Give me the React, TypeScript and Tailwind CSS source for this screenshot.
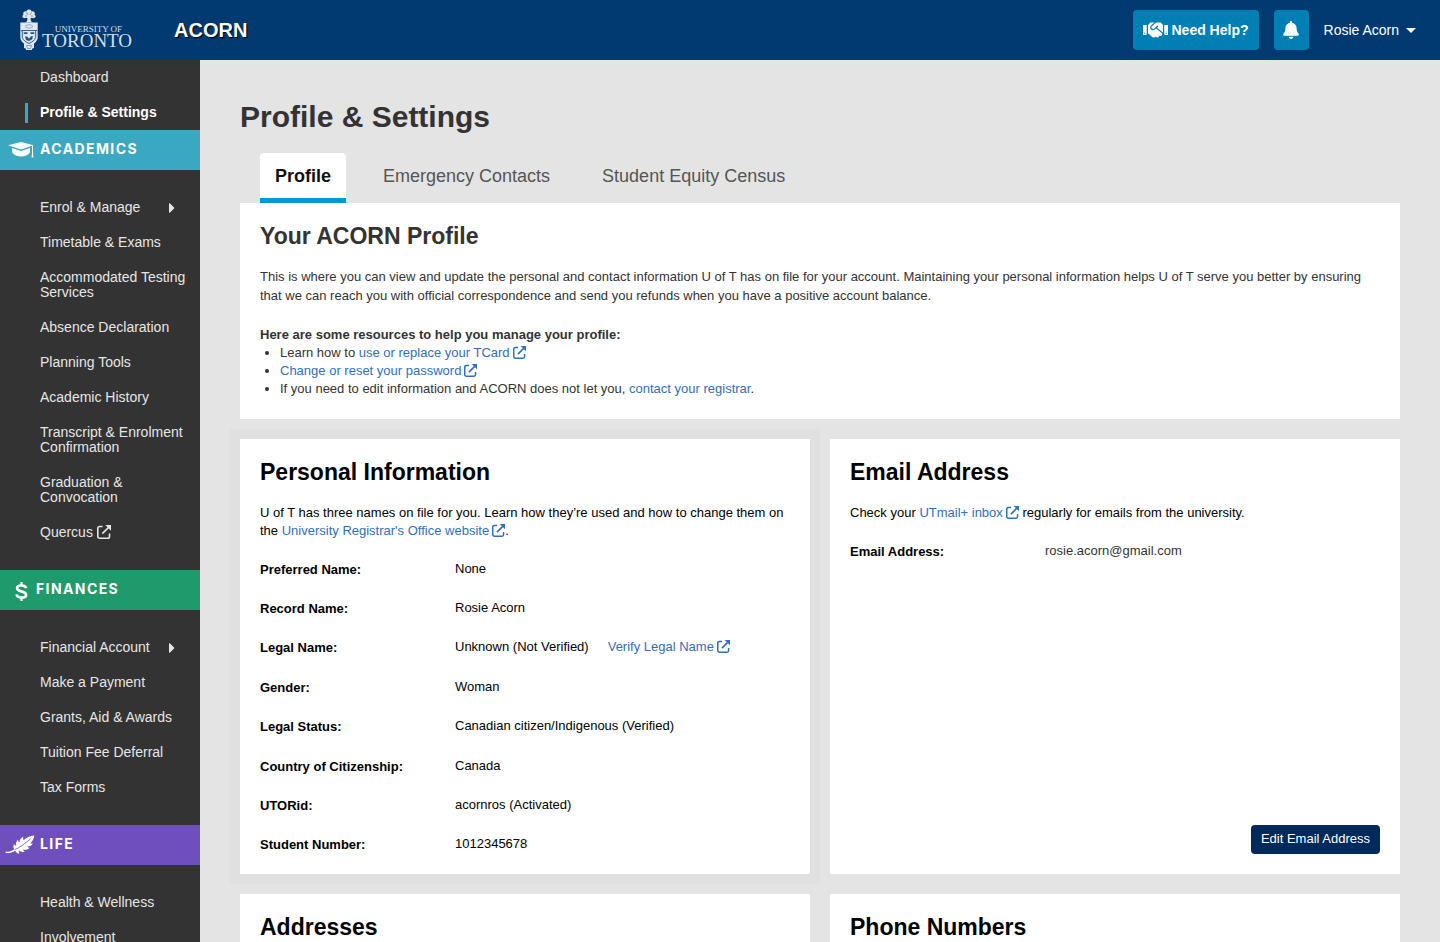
import type { ReactNode } from "react";
import { FaBell, FaCaretRight, FaHandshake } from "react-icons/fa";

function ExternalIcon({ className = "size-[13px]" }: { className?: string }) {
  return (
    <svg viewBox="0 0 14 14" className={"inline-block align-[-2px] " + className} aria-hidden="true">
      <path
        d="M5.500 1.500H2.600A1.800 1.800 0 0 0 .8 3.300v8.100a1.800 1.800 0 0 0 1.800 1.800h8.100a1.800 1.800 0 0 0 1.800-1.800V8.500"
        fill="none"
        stroke="currentColor"
        strokeWidth="1.6"
      />
      <path d="M5.300 8.700 11.500 2.500" stroke="currentColor" strokeWidth="1.7" />
      <path d="M8.300 0H14v5.700Z" fill="currentColor" />
    </svg>
  );
}

function CapIcon() {
  return (
    <svg viewBox="0 0 26 16" className="h-4 w-[26px]" fill="currentColor" aria-hidden="true">
      <path d="M0 3.200 13 0l12.500 3.200L13 7.400Z" />
      <path d="M4.200 6 13 9l9-3v4.500c-2 2.700-5.300 4-9 4s-7-1.300-8.800-4Z" />
      <path d="M24 3.500h1v8l.4 4h-1.800l.4-4Z" />
    </svg>
  );
}

function DollarIcon() {
  return (
    <svg
      viewBox="0 0 13 19"
      className="mt-[3px] h-[19px] w-[13px]"
      fill="none"
      stroke="currentColor"
      strokeWidth="2.700"
      aria-hidden="true"
    >
      <path d="M11.100 6.200C10.800 4.300 9 3.500 6.500 3.500S2.100 4.500 2.100 6.300c0 4.200 9 2.100 9 6.400 0 1.900-1.900 2.900-4.500 2.900s-4.700-1-5-3.200" />
      <path d="M6.500 0v4M6.500 15v4" strokeWidth="2.200" />
    </svg>
  );
}

function LeafIcon() {
  return (
    <svg viewBox="0 0 30 20" className="h-5 w-[30px]" fill="currentColor" aria-hidden="true">
      <path d="M.5 16.800C4.500 17 7.500 15.800 9.300 14.200 7.800 12 8.300 10.300 9.300 9c.5 1.200 1.200 1.700 1.900 1.900-.5-2.700 0-5 1.900-6.300 0 1.500.6 2.500 1.300 3.100.1-2.600 1.500-4.900 3.900-6.200-.4 1.700-.1 2.800.5 3.500C21 2.800 25 1 29.200.5 28.800 4 27.500 6.500 25.200 8.300c1 .4 1.900.3 2.700 0-1.100 2.200-3.200 3.200-5.700 3.200.6.9 1.600 1.200 2.600 1.200-1.800 2-4.300 2.500-6.800 1.800.2 1 .8 1.700 1.800 2.200-2.500.6-4.700 0-6-1.200-.2 1.300.2 2.300.8 3.100-2.200 0-3.700-1.100-4.300-2.900C7.500 17.400 4 18.400.7 18Z" />
      <path d="M9.500 14.800C15 12.500 20.500 8 25.500 3.800" fill="none" stroke="#6f4fbb" strokeWidth=".8" />
    </svg>
  );
}

function Crest() {
  return (
    <svg viewBox="0 0 18 42" className="h-[42px] w-[18px]" aria-hidden="true">
      <g fill="#dfe8f0">
        <circle cx="9" cy="3.200" r="2.700" />
        <circle cx="5.500" cy="4.500" r="2.300" />
        <circle cx="12.500" cy="4.500" r="2.300" />
        <circle cx="4.500" cy="7.300" r="2" />
        <circle cx="13.500" cy="7.300" r="2" />
        <path d="M5 6h8v2.500l-2.500.8.500 3 2 1.200H5l2-1.200.5-3L5 8.500Z" />
        <path d="M.3 13.500h17.400v15.500C17 32 15.500 33.500 14 34.500v4.500l-2 .8V41H6v-1.200L4 39v-4.500C2.500 33.500 1 32 .3 29Z" />
      </g>
      <g fill="none" stroke="#003a70" strokeWidth=".8">
        <path d="M6 3.500 8 5m4-1.500L10.300 5M5 7h2m4 0h2" opacity=".6" />
        <path d="M.8 21.500h16.400" />
        <path d="M2.300 22v6.500c1 3 3.700 4.500 6.700 6 3-1.500 5.700-3 6.700-6V22" />
        <path d="M5.800 16.500c1.600-1 5-1 6.500 0v1.800c-1.500 1-4.900 1-6.500 0Z" opacity=".4" />
        <path d="M6.500 36.500h5l-1 3h-3Z" opacity=".5" />
      </g>
      <path d="M3.800 23.200h3.700V25H3.800Zm6.700 0h3.700V25h-3.700ZM5 27.500h2l2 2 2.500-2.500 1.500.5-1 3-3 1.500-3-1Z" fill="#003a70" opacity=".85" />
    </svg>
  );
}

type NavEntry = { label: string; more?: boolean; external?: boolean };

function NavList({ items }: { items: NavEntry[] }) {
  return (
    <ul className="py-5">
      {items.map((item) => (
        <li key={item.label}>
          <a href="#" className="relative block py-[10px] pr-2 pl-10">
            {item.label}
            {item.external && <ExternalIcon className="ml-1 size-[14px]" />}
            {item.more && <FaCaretRight className="absolute top-[10px] left-[164px] size-4" />}
          </a>
        </li>
      ))}
    </ul>
  );
}

function SectionTitle({ icon, className, children }: { icon: ReactNode; className: string; children: string }) {
  return (
    <h2 className={"flex h-10 items-center text-sm font-bold tracking-widest text-white " + className}>
      {icon}
      <span className="pb-[2px] font-['Inter','Liberation_Sans',sans-serif]">{children}</span>
    </h2>
  );
}

const academics: NavEntry[] = [
  { label: "Enrol & Manage", more: true },
  { label: "Timetable & Exams" },
  { label: "Accommodated Testing Services" },
  { label: "Absence Declaration" },
  { label: "Planning Tools" },
  { label: "Academic History" },
  { label: "Transcript & Enrolment Confirmation" },
  { label: "Graduation & Convocation" },
  { label: "Quercus", external: true },
];

const finances: NavEntry[] = [
  { label: "Financial Account", more: true },
  { label: "Make a Payment" },
  { label: "Grants, Aid & Awards" },
  { label: "Tuition Fee Deferral" },
  { label: "Tax Forms" },
];

const life: NavEntry[] = [{ label: "Health & Wellness" }, { label: "Involvement" }];

const details: { label: string; value: ReactNode }[] = [
  { label: "Preferred Name:", value: "None" },
  { label: "Record Name:", value: "Rosie Acorn" },
  {
    label: "Legal Name:",
    value: (
      <>
        Unknown (Not Verified)
        <TextLink external className="ml-[19px]">
          Verify Legal Name
        </TextLink>
      </>
    ),
  },
  { label: "Gender:", value: "Woman" },
  { label: "Legal Status:", value: "Canadian citizen/Indigenous (Verified)" },
  { label: "Country of Citizenship:", value: "Canada" },
  { label: "UTORid:", value: "acornros (Activated)" },
  { label: "Student Number:", value: "1012345678" },
];

function TextLink({
  children,
  external = false,
  className = "",
}: {
  children: string;
  external?: boolean;
  className?: string;
}) {
  return (
    <a href="#" className={"text-[#2f6fc1] " + className}>
      {children}
      {external && <ExternalIcon className="ml-[3px] size-[13px]" />}
    </a>
  );
}

function Card({ title, className = "", children }: { title: string; className?: string; children?: ReactNode }) {
  return (
    <section className={"flex flex-col bg-white px-5 pt-5 text-black " + className}>
      <h2 className="text-[23px] leading-[26px] font-bold">{title}</h2>
      {children}
    </section>
  );
}

export default function App() {
  return (
    <div className="flex h-screen flex-col bg-[#e4e4e4] font-['Liberation_Sans',Arial,sans-serif] text-[13px] leading-[18px] text-[#333]">
      <header className="flex h-[60px] shrink-0 items-center bg-[#003a70] text-white">
        <a href="#" aria-label="University of Toronto" className="ml-5 flex items-center gap-1 text-[#d5dfea]">
          <Crest />
          <span className="flex flex-col items-end pt-[10px] font-['Liberation_Serif',serif]">
            <span className="pr-[10px] text-[9px] leading-[12px]">UNIVERSITY OF</span>
            <span className="text-[19px] leading-[12px]">TORONTO</span>
          </span>
        </a>
        <a href="#" className="ml-[42px] text-xl font-bold [text-shadow:1px_1px_1px_#000]">
          ACORN
        </a>
        <div className="ml-auto flex items-center pr-6">
          <button className="flex h-10 items-center gap-1 rounded bg-[#007fb5] px-[10px] text-sm font-bold">
            <FaHandshake className="h-5 w-[25px]" />
            Need Help?
          </button>
          <button aria-label="Notifications" className="ml-[15px] flex h-10 w-[35px] items-center justify-center rounded bg-[#007fb5]">
            <FaBell className="size-[18px]" />
          </button>
          <button className="ml-[15px] flex items-center gap-[7px] text-sm">
            Rosie Acorn
            <svg viewBox="0 0 10 5" className="h-[5px] w-[10px]" fill="currentColor" aria-hidden="true">
              <path d="M0 0h10L5 5Z" />
            </svg>
          </button>
        </div>
      </header>

      <div className="flex min-h-0 flex-1">
        <nav className="w-[200px] shrink-0 overflow-y-auto bg-[#333] text-sm leading-[15px] text-[#e6e6e6] [scrollbar-width:none]">
          <a href="#" className="block py-[10px] pl-10">
            Dashboard
          </a>
          <a href="#" className="flex h-[35px] items-center pl-[25px] font-bold text-white">
            <span className="mr-3 h-5 w-[3px] bg-[#3aa8c1]" />
            Profile &amp; Settings
          </a>
          <SectionTitle className="gap-[6px] bg-[#3aa8c1] pl-2" icon={<CapIcon />}>
            ACADEMICS
          </SectionTitle>
          <NavList items={academics} />
          <SectionTitle className="gap-2 bg-[#1f9a6d] pl-[15px]" icon={<DollarIcon />}>
            FINANCES
          </SectionTitle>
          <NavList items={finances} />
          <SectionTitle className="gap-[5px] bg-[#6f4fbb] pl-[5px]" icon={<LeafIcon />}>
            LIFE
          </SectionTitle>
          <NavList items={life} />
        </nav>

        <main className="min-w-0 flex-1 overflow-y-auto px-10 pt-9 [scrollbar-width:none]">
          <h1 className="text-3xl leading-[42px] font-bold">Profile &amp; Settings</h1>
          <div role="tablist" className="mt-[15px] flex gap-[22px] pl-5 text-lg text-[#555]">
            <button
              role="tab"
              aria-selected="true"
              className="h-[50px] rounded-t border-b-[5px] border-[#0099d8] bg-white px-[15px] font-bold text-[#111]"
            >
              Profile
            </button>
            <button role="tab" aria-selected="false" className="h-[50px] border-b-[5px] border-transparent px-[15px]">
              Emergency Contacts
            </button>
            <button role="tab" aria-selected="false" className="h-[50px] border-b-[5px] border-transparent px-[15px]">
              Student Equity Census
            </button>
          </div>

          <section className="bg-white px-5 pt-5 pb-[21px]">
            <h2 className="text-[23px] leading-[26px] font-bold">Your ACORN Profile</h2>
            <p className="mt-[18px] leading-[19px]">
              This is where you can view and update the personal and contact information U of T has on file for your
              account. Maintaining your personal information helps U of T serve you better by ensuring that we can reach
              you with official correspondence and send you refunds when you have a positive account balance.
            </p>
            <p className="mt-[21px] font-bold">Here are some resources to help you manage your profile:</p>
            <ul className="list-disc pl-5">
              <li>
                Learn how to <TextLink external>use or replace your TCard</TextLink>
              </li>
              <li>
                <TextLink external>Change or reset your password</TextLink>
              </li>
              <li>
                If you need to edit information and ACORN does not let you, <TextLink>contact your registrar</TextLink>.
              </li>
            </ul>
          </section>

          <div className="mt-5 grid grid-cols-2 gap-5">
            <Card title="Personal Information" className="min-h-[435px] pb-[10px] shadow-[0_0_0_10px_#e0e0e0]">
              <p className="mt-[19px]">
                U of T has three names on file for you. Learn how they’re used and how to change them on the{" "}
                <TextLink external>University Registrar's Office website</TextLink>.
              </p>
              <dl className="mt-[9px] grid flex-1 auto-rows-fr">
                {details.map((row) => (
                  <div key={row.label} className="flex items-center">
                    <dt className="w-[195px] pt-[2px] font-bold">{row.label}</dt>
                    <dd>{row.value}</dd>
                  </div>
                ))}
              </dl>
            </Card>

            <Card title="Email Address" className="pb-5">
              <p className="mt-[19px]">
                Check your <TextLink external>UTmail+ inbox</TextLink> regularly for emails from the university.
              </p>
              <dl className="mt-[9px] flex h-[39px] items-center">
                <dt className="w-[195px] pt-[2px] font-bold">Email Address:</dt>
                <dd className="text-[#333]">rosie.acorn@gmail.com</dd>
              </dl>
              <button className="mt-auto h-[29px] self-end rounded bg-[#002a5c] px-[10px] pb-[2px] text-white">
                Edit Email Address
              </button>
            </Card>

            <Card title="Addresses" className="min-h-[300px]" />
            <Card title="Phone Numbers" className="min-h-[300px]" />
          </div>
        </main>
      </div>
    </div>
  );
}
